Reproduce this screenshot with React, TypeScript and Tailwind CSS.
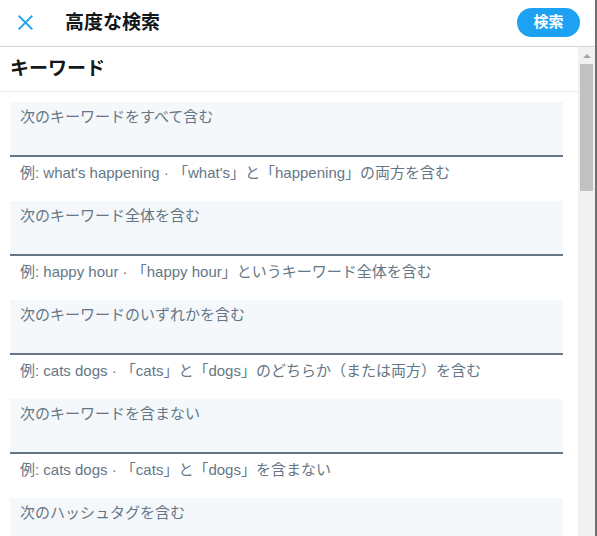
const fields = [
  {
    label: "次のキーワードをすべて含む",
    hint: "例: what's happening · 「what's」と「happening」の両方を含む",
  },
  {
    label: "次のキーワード全体を含む",
    hint: "例: happy hour · 「happy hour」というキーワード全体を含む",
  },
  {
    label: "次のキーワードのいずれかを含む",
    hint: "例: cats dogs · 「cats」と「dogs」のどちらか（または両方）を含む",
  },
  {
    label: "次のキーワードを含まない",
    hint: "例: cats dogs · 「cats」と「dogs」を含まない",
  },
  { label: "次のハッシュタグを含む", hint: "" },
];

function Field({ label, hint }: { label: string; hint: string }) {
  return (
    <div>
      <div className="h-[55px] border-b-2 border-[#657786] bg-[#f5f8fa] px-[10px] pt-[5px] text-[15px] leading-[20px] text-[#657786]">
        {label}
      </div>
      <div className="h-[44px] px-[10px] pt-[6px] text-[15px] leading-[20px] text-[#657786]">
        {hint}
      </div>
    </div>
  );
}

export default function App() {
  return (
    <div
      className="flex h-[536px] w-[597px] overflow-hidden bg-white"
      style={{ fontFamily: '"Liberation Sans", "Noto Sans CJK JP", sans-serif' }}
    >
      <div className="flex w-[595px] flex-col">
        <header className="flex h-[47px] shrink-0 items-center border-b border-[#ccd6dd] pb-[1px] pl-[15px] pr-[15px]">
          <svg viewBox="0 0 24 24" className="h-[21px] w-[21px]" fill="none" stroke="#1da1f2" strokeWidth="2.2" strokeLinecap="square">
            <path d="M5 5l14 14M19 5L5 19" />
          </svg>
          <h1 className="ml-[29px] text-[19px] font-bold leading-[24px] text-[#14171a]">高度な検索</h1>
          <button className="ml-auto h-[29px] w-[63px] rounded-full bg-[#1da1f2] text-[15px] font-bold text-white">
            検索
          </button>
        </header>
        <div className="flex min-h-0 flex-1">
          <main className="flex-1 overflow-hidden">
            <div className="flex h-[45px] items-center border-b border-[#e6ecf0] px-[10px] text-[19px] font-bold text-[#14171a]">
              キーワード
            </div>
            <div className="pl-[10px] pr-[15px] pt-[10px]">
              {fields.map((f) => (
                <Field key={f.label} label={f.label} hint={f.hint} />
              ))}
            </div>
          </main>
          <div className="flex w-[17px] flex-col items-center bg-[#f1f1f1]">
            <div className="flex h-[17px] w-full items-center justify-center">
              <svg viewBox="0 0 8 4" className="h-[4px] w-[8px]">
                <path d="M0 4L4 0L8 4Z" fill="#a3a3a3" />
              </svg>
            </div>
            <div className="h-[127px] w-[13px] bg-[#c1c1c1]" />
          </div>
        </div>
      </div>
      <div className="w-[2px] bg-[#707070]" />
    </div>
  );
}
